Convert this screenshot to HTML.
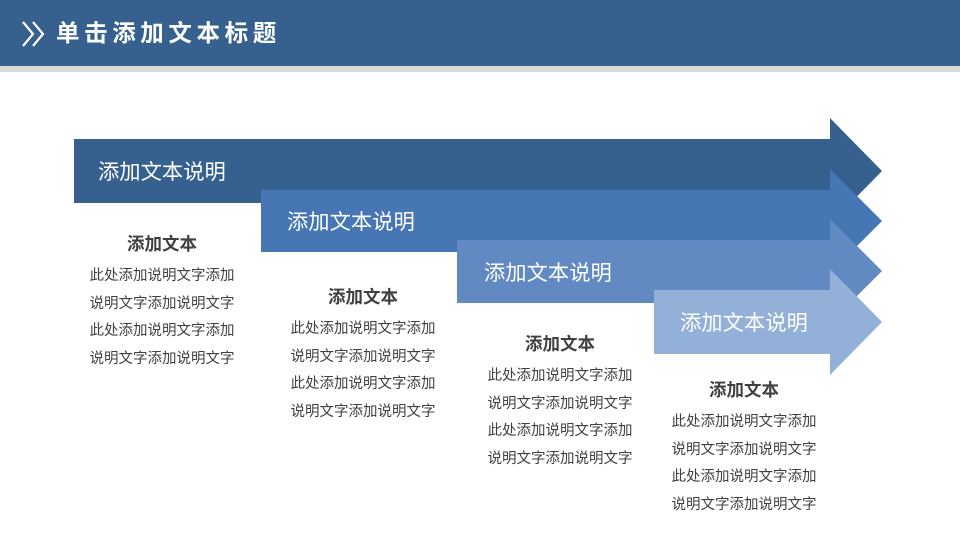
<!DOCTYPE html><html><head><meta charset="utf-8"><style>
body{margin:0;width:960px;height:540px;overflow:hidden;background:#fff;font-family:"Liberation Sans","Noto Sans CJK SC",sans-serif;position:relative}
.hdr{position:absolute;left:0;top:0;width:960px;height:66px;background:#36618f}
.strip{position:absolute;left:0;top:66px;width:960px;height:6px;background:#dcdad6}
.ttl{position:absolute;left:56px;top:17px;color:#fff;font-size:23.5px;font-weight:bold;letter-spacing:4.6px;line-height:32px}
.lab{position:absolute;color:#fff;font-size:21.3px;line-height:24px}
.col{position:absolute;width:170px;text-align:center;color:#404040}
.col b{display:block;font-size:17.5px;line-height:20px;margin-bottom:9px}
.col p{margin:0;font-size:14.5px;line-height:27.5px}
</style></head><body>
<div class="hdr"></div><div class="strip"></div>
<svg style="position:absolute;left:20px;top:20px" width="30" height="28"><polyline points="3,2 13,14 3,26" fill="none" stroke="#fff" stroke-width="2.2"/><polyline points="13,2 23,14 13,26" fill="none" stroke="#fff" stroke-width="2.2"/></svg>
<div class="ttl">单击添加文本标题</div>
<svg style="position:absolute;left:0;top:0" width="960" height="540">
<polygon points="74,139 830,139 830,118 882,171 830,224 830,203 74,203" fill="#36618f"/>
<polygon points="261,190 830,190 830,169 882,221 830,273 830,252 261,252" fill="#4677b4"/>
<polygon points="457,240 830,240 830,219 882,271 830,323 830,303 457,303" fill="#6189c2"/>
<polygon points="654,290 830,290 830,269 882,322 830,375 830,354 654,354" fill="#93b1d8"/>
</svg>
<div class="lab" style="left:98px;top:160px">添加文本说明</div>
<div class="lab" style="left:287px;top:210px">添加文本说明</div>
<div class="lab" style="left:484px;top:261px">添加文本说明</div>
<div class="lab" style="left:680px;top:311px">添加文本说明</div>
<div class="col" style="left:77px;top:234px"><b>添加文本</b><p>此处添加说明文字添加<br>说明文字添加说明文字<br>此处添加说明文字添加<br>说明文字添加说明文字</p></div>
<div class="col" style="left:278px;top:287px"><b>添加文本</b><p>此处添加说明文字添加<br>说明文字添加说明文字<br>此处添加说明文字添加<br>说明文字添加说明文字</p></div>
<div class="col" style="left:475px;top:334px"><b>添加文本</b><p>此处添加说明文字添加<br>说明文字添加说明文字<br>此处添加说明文字添加<br>说明文字添加说明文字</p></div>
<div class="col" style="left:659px;top:380px"><b>添加文本</b><p>此处添加说明文字添加<br>说明文字添加说明文字<br>此处添加说明文字添加<br>说明文字添加说明文字</p></div>
</body></html>
